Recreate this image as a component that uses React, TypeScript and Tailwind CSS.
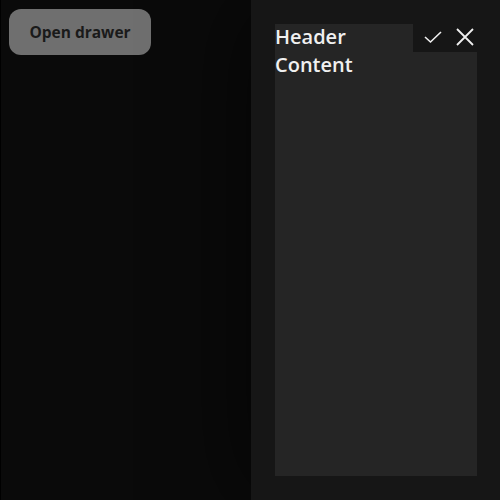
import React from "react";

export default function App() {
  return (
    <div
      className="relative h-[500px] w-[500px] overflow-hidden bg-[#0a0a0a] border-l border-black"
      style={{ fontFamily: '"Open Sans", "Noto Sans", sans-serif' }}
    >
      <div className="pl-2 pt-[9px]">
        <button className="h-[46px] w-[142px] rounded-[12px] bg-[#6f6f6f] pt-[2px] text-[15.5px] font-bold text-[#1a1a1a]">
          Open drawer
        </button>
      </div>
      <div className="absolute right-0 top-0 flex h-[500px] w-[249px] flex-col bg-[#161616] py-6 pl-6 pr-[23px] shadow-[-10px_0_90px_rgba(0,0,0,0.55)]">
        <div className="flex h-[28px] items-stretch">
          <div className="flex flex-1 items-start bg-[#252525] text-[20px] font-semibold leading-[26px] text-[#f0f0f0]">
            Header
          </div>
          <div className="flex w-[64px] items-center justify-end gap-[14px] pr-[3px] pb-[2px]">
            <svg width="18" height="14" viewBox="0 0 18 14" fill="none" stroke="#f0f0f0" strokeWidth="1.6">
              <path d="M1 7 L6.5 12 L17 2" />
            </svg>
            <svg width="18" height="18" viewBox="0 0 18 18" fill="none" stroke="#f0f0f0" strokeWidth="1.8">
              <path d="M1 1 L17 17 M17 1 L1 17" />
            </svg>
          </div>
        </div>
        <div className="flex-1 bg-[#252525] text-[20px] font-semibold leading-[26px] text-[#f0f0f0]">
          Content
        </div>
      </div>
    </div>
  );
}
